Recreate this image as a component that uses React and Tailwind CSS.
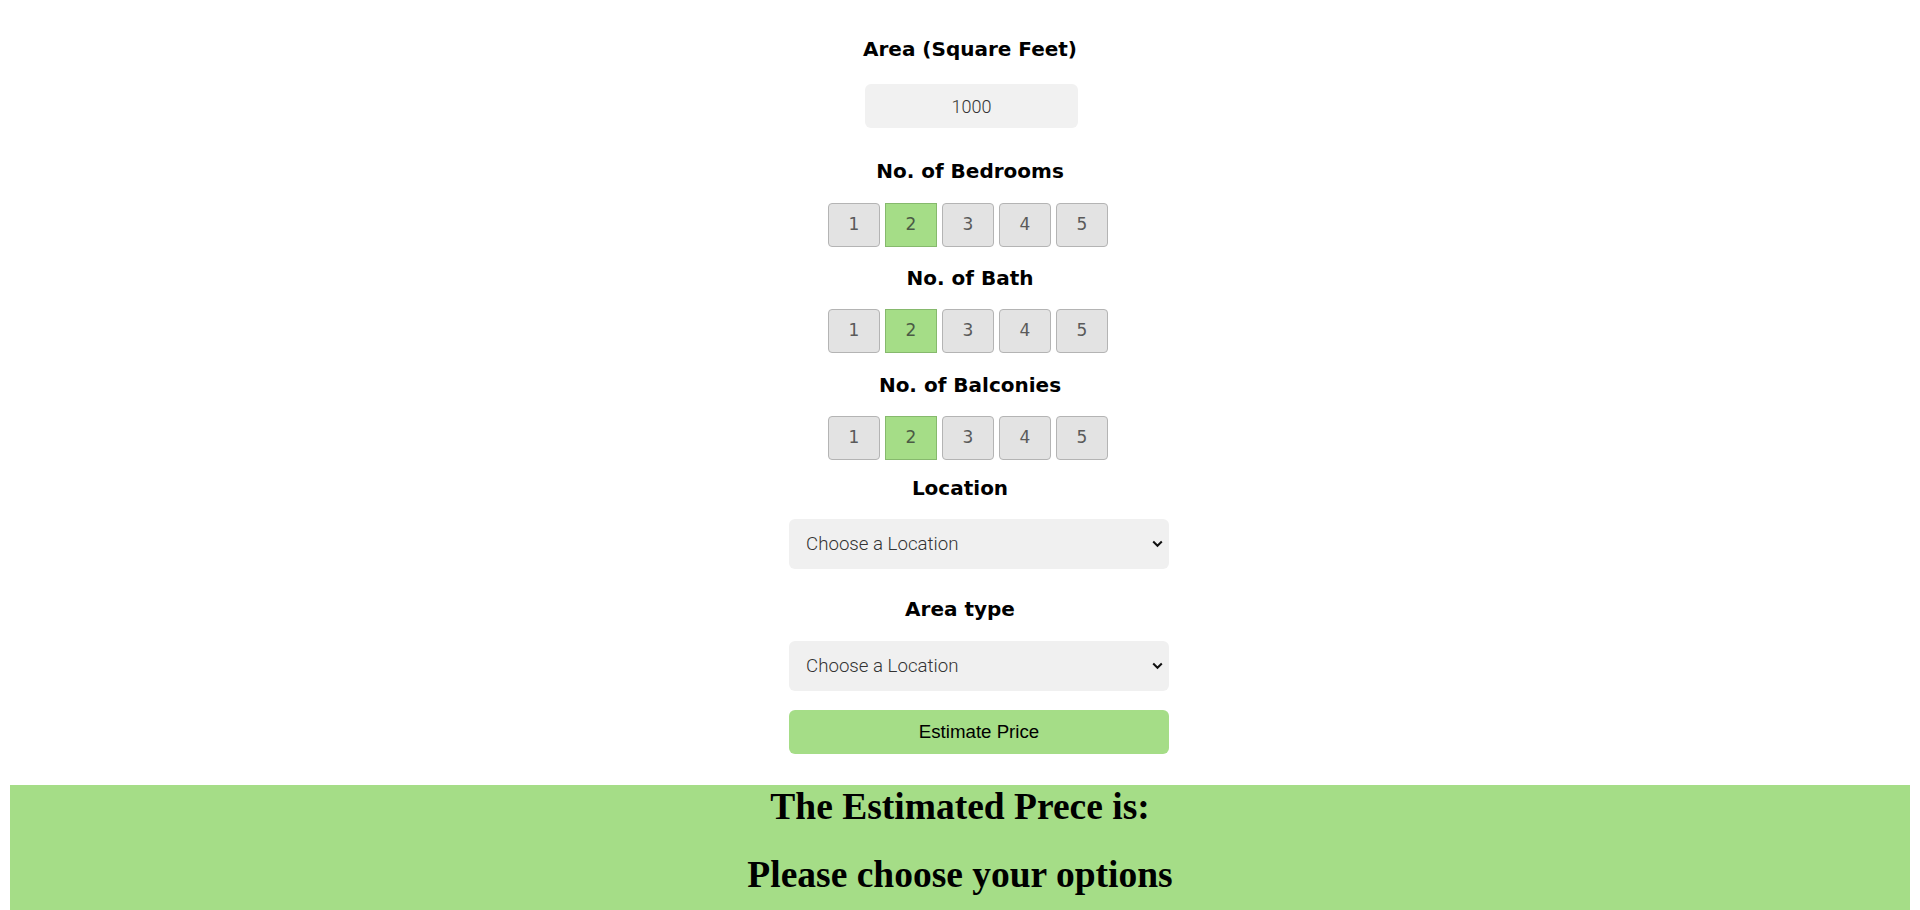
import { useState } from 'react';

const heading = "font-['DejaVu_Sans',Verdana,sans-serif] text-[20px] leading-[23px] font-bold text-black";

const NumberPicker = ({ value, onChange, className }) => (
  <div className={`flex gap-[5px] ${className}`}>
    {[1, 2, 3, 4, 5].map((n) => (
      <button
        key={n}
        onClick={() => onChange(n)}
        className={
          n === value
            ? "w-[52px] h-[44px] border border-[#86b96d] bg-[#a5dd87] text-[#4b5a45] font-['DejaVu_Sans',sans-serif] text-[17px]"
            : "w-[52px] h-[44px] rounded-[4px] border border-[#b4b4b4] bg-[#e3e3e3] text-[#5a5a5a] font-['DejaVu_Sans',sans-serif] text-[17px]"
        }
      >
        {n}
      </button>
    ))}
  </div>
);

const Dropdown = ({ className }) => (
  <div className={`relative w-[380px] h-[50px] ${className}`}>
    <select className="w-full h-full appearance-none rounded-[6px] bg-[#f0f0f0] pl-[17px] pr-10 font-['Roboto',sans-serif] font-light text-[18.7px] text-[#333] outline-none">
      <option>Choose a Location</option>
    </select>
    <svg
      className="pointer-events-none absolute right-[6px] top-[21px]"
      width="11"
      height="8"
      viewBox="0 0 11 8"
      fill="none"
    >
      <path d="M1.2 1.5 L5.5 5.8 L9.8 1.5" stroke="#111" strokeWidth="2" />
    </svg>
  </div>
);

export default function App() {
  const [bed, setBed] = useState(2);
  const [bath, setBath] = useState(2);
  const [balc, setBalc] = useState(2);

  return (
    <div className="h-screen overflow-hidden flex flex-col bg-white">
      <div className="flex flex-col items-center pl-[20px] pt-[38px]">
        <h3 className={heading}>Area (Square Feet)</h3>
        <input
          defaultValue="1000"
          className="mt-[23px] ml-[3px] w-[213px] h-[44px] rounded-[6px] bg-[#f1f1f1] text-center font-['Roboto',sans-serif] font-light text-[18px] text-[#333] outline-none"
        />
        <h3 className={`mt-[32px] ${heading}`}>No. of Bedrooms</h3>
        <NumberPicker value={bed} onChange={setBed} className="mt-[20px] mr-[4px]" />
        <h3 className={`mt-[20px] ${heading}`}>No. of Bath</h3>
        <NumberPicker value={bath} onChange={setBath} className="mt-[19px] mr-[4px]" />
        <h3 className={`mt-[21px] ${heading}`}>No. of Balconies</h3>
        <NumberPicker value={balc} onChange={setBalc} className="mt-[19px] mr-[4px]" />
      </div>

      <div className="flex flex-col items-center">
        <h3 className={`mt-[17px] ${heading}`}>Location</h3>
        <Dropdown className="mt-[19px] ml-[38px]" />
        <h3 className={`mt-[29px] ${heading}`}>Area type</h3>
        <Dropdown className="mt-[20px] ml-[38px]" />
        <button className="mt-[19px] ml-[38px] w-[380px] h-[44px] rounded-[6px] bg-[#a5dd87] font-['Liberation_Sans',Arial,sans-serif] text-[18.7px] text-black">
          Estimate Price
        </button>
      </div>

      <div className="mt-[31px] mx-[10px] flex-1 bg-[#a5dd87] pt-[1px] text-center font-['Liberation_Serif','Times_New_Roman',serif] font-bold text-[37.5px] leading-[41px] text-black">
        <h2>The Estimated Prece is:</h2>
        <h2 className="mt-[27px]">Please choose your options</h2>
      </div>
    </div>
  );
}
